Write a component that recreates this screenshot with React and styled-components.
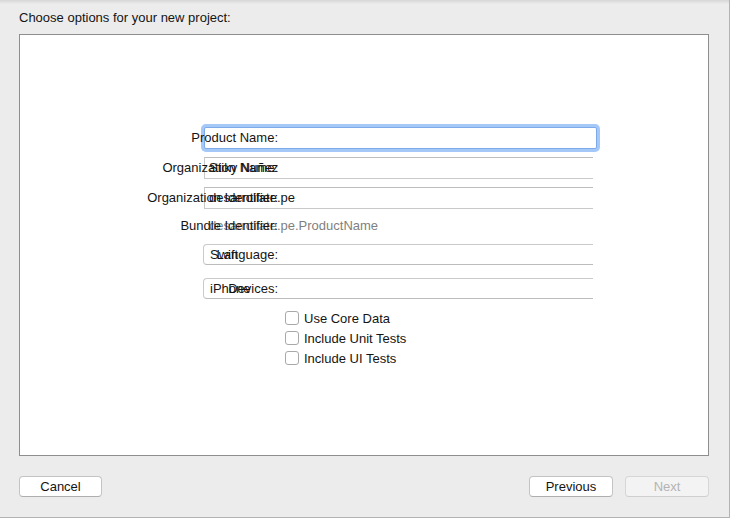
import React from 'react'
import styled, { createGlobalStyle } from 'styled-components'

const Global = createGlobalStyle`
  html, body { margin: 0; padding: 0; background: #ececec; }
  body {
    font-family: "Liberation Sans", Arial, sans-serif;
    font-size: 13px;
    color: #141414;
  }
  * { box-sizing: border-box; }
`

const Window = styled.div`
  width: 730px;
  height: 518px;
  padding: 10px 0 0 19px;
  background: linear-gradient(#d6d6d6, #ececec 4px);
  border-right: 1px solid #b3b3b3;
  border-bottom: 1px solid #b3b3b3;
`

const Title = styled.div`
  height: 16px;
  line-height: 16px;
  margin-bottom: 8px;
`

const Panel = styled.div`
  width: 690px;
  height: 422px;
  background: #fff;
  border: 1px solid #8e8e8e;
  padding-top: 92px;
`

const Form = styled.div`
  display: flex;
  flex-direction: column;
  width: 573px;
`

const Row = styled.div`
  display: grid;
  grid-template-columns: 184px 74px 1fr;
  height: ${p => p.$h || 22}px;
  margin-top: ${p => p.$top || 0}px;
`

const Label = styled.div`
  grid-row: 1;
  grid-column: 1 / 3;
  justify-self: end;
  align-self: center;
  line-height: 16px;
  z-index: 1;
  white-space: nowrap;
`

const FocusField = styled.div`
  grid-row: 1;
  grid-column: 2 / 4;
  margin-right: -4px;
  border: 1px solid #7eaaea;
  border-radius: 2px;
  box-shadow: 0 0 0 3px #a4c9f8;
  background: #fff;
`

const Field = styled.div`
  grid-row: 1;
  grid-column: 2 / 4;
  border: 1px solid #c9c9c9;
  border-right: none;
  border-top-color: #bdbdbd;
  padding-left: 4px;
  line-height: 20px;
  white-space: nowrap;
`

const Value = styled.div`
  grid-row: 1;
  grid-column: 2 / 4;
  padding-left: 5px;
  align-self: center;
  line-height: 16px;
  color: #7f7f7f;
`

const Popup = styled.div`
  grid-row: 1;
  grid-column: 2 / 4;
  margin-left: -1px;
  border: 1px solid #cacaca;
  border-right: none;
  border-bottom-color: #bcbcbc;
  border-radius: 4px 0 0 4px;
  padding-left: 6px;
  line-height: 19px;
`

const Checks = styled.div`
  display: flex;
  flex-direction: column;
  margin-top: 9px;
  padding-left: 265px;
`

const CheckRow = styled.label`
  display: flex;
  align-items: center;
  gap: 5px;
  height: 20px;
`

const Box = styled.span`
  width: 14px;
  height: 14px;
  border: 1px solid #a9a9a9;
  border-radius: 3px;
  background: #fff;
`

const Footer = styled.div`
  display: flex;
  width: 690px;
  margin-top: 20px;
  gap: 12px;
`

const Button = styled.button`
  width: ${p => p.$w || 84}px;
  height: 21px;
  padding: 0;
  font-family: "Liberation Sans", Arial, sans-serif;
  font-size: 13px;
  color: ${p => (p.disabled ? '#b3b3b3' : '#141414')};
  background: ${p => (p.disabled ? '#f3f3f3' : '#fff')};
  border: 1px solid ${p => (p.disabled ? '#d6d6d6' : '#c4c4c4')};
  border-bottom-color: ${p => (p.disabled ? '#cfcfcf' : '#aeaeae')};
  border-radius: 4px;
  &:first-child { margin-right: auto; }
`

export default function App() {
  return (
    <>
      <Global />
      <Window>
        <Title>Choose options for your new project:</Title>
        <Panel>
          <Form>
            <Row>
              <FocusField />
              <Label>Product Name:</Label>
            </Row>
            <Row $top={8}>
              <Field>Stiky Nuñez</Field>
              <Label>Organization Name:</Label>
            </Row>
            <Row $top={8}>
              <Field>desarrollate.pe</Field>
              <Label>Organization Identifier:</Label>
            </Row>
            <Row $top={7} $h={20}>
              <Value>desarrollate.pe.ProductName</Value>
              <Label>Bundle Identifier:</Label>
            </Row>
            <Row $top={8} $h={21}>
              <Popup>Swift</Popup>
              <Label>Language:</Label>
            </Row>
            <Row $top={13} $h={21}>
              <Popup>iPhone</Popup>
              <Label>Devices:</Label>
            </Row>
          </Form>
          <Checks>
            <CheckRow><Box />Use Core Data</CheckRow>
            <CheckRow><Box />Include Unit Tests</CheckRow>
            <CheckRow><Box />Include UI Tests</CheckRow>
          </Checks>
        </Panel>
        <Footer>
          <Button $w={83}>Cancel</Button>
          <Button>Previous</Button>
          <Button disabled>Next</Button>
        </Footer>
      </Window>
    </>
  )
}
